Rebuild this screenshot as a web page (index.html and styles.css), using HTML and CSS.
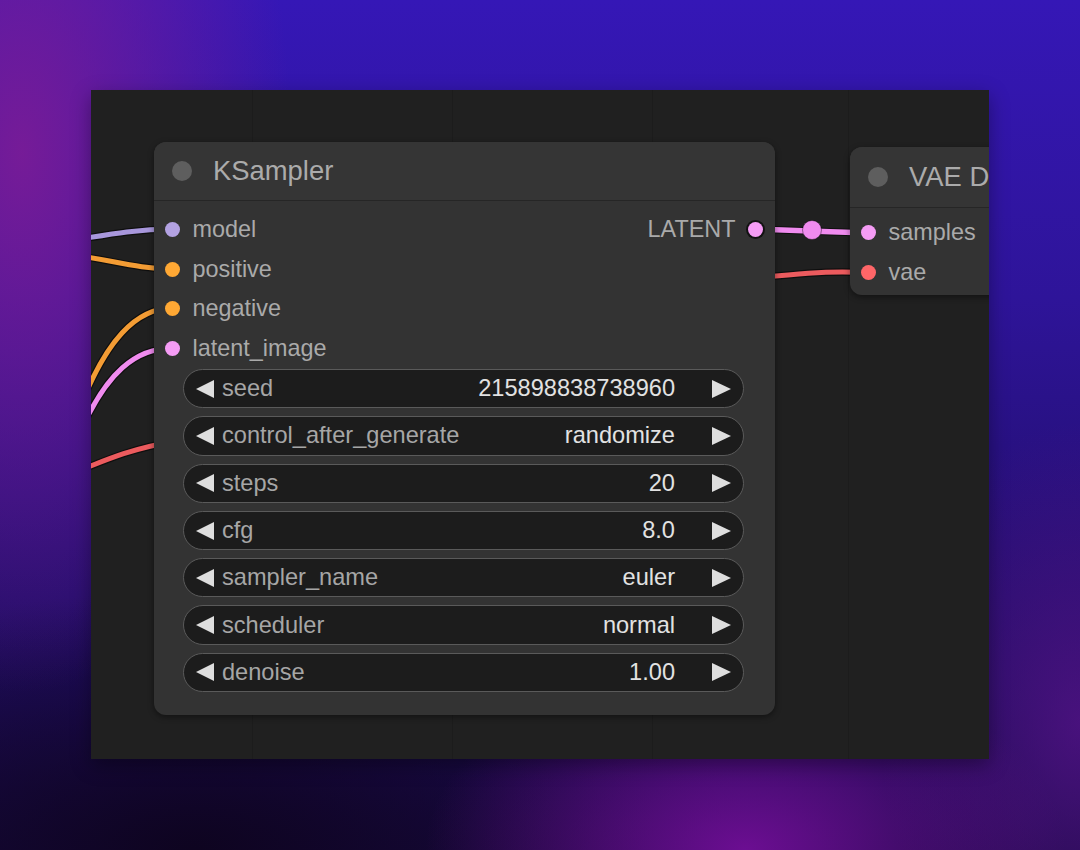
FILE: index.html
```html
<!DOCTYPE html>
<html>
<head>
<meta charset="utf-8">
<link rel="stylesheet" href="styles.css">
</head>
<body>
<div class="canvas">
  <svg class="wires" width="898" height="669" viewBox="0 0 898 669">
    <g fill="none" stroke-linecap="round">
      <path class="edge" d="M -40 154 C 10 146, 40 139, 82 139"/>
      <path class="w-purple" d="M -40 154 C 10 146, 40 139, 82 139"/>
      <path class="edge" d="M -40 163 C 10 166, 40 179, 82 179"/>
      <path class="w-orange" d="M -40 163 C 10 166, 40 179, 82 179"/>
      <path class="edge" d="M -12 320 C 15 250, 45 218, 82 218"/>
      <path class="w-orange" d="M -12 320 C 15 250, 45 218, 82 218"/>
      <path class="edge" d="M -12 345 C 15 282, 45 258, 82 258"/>
      <path class="w-pink" d="M -12 345 C 15 282, 45 258, 82 258"/>
      <path class="edge" d="M -30 388 C 10 372, 40 358, 82 352"/>
      <path class="w-red" d="M -30 388 C 10 372, 40 358, 82 352"/>
      <path class="edge" d="M 664 139 C 700 140, 740 142, 778 143"/>
      <path class="w-pink thick" d="M 664 139 C 700 140, 740 142, 778 143"/>
      <path class="edge" d="M 640 191 C 700 184, 740 180, 778 183"/>
      <path class="w-red" d="M 640 191 C 700 184, 740 180, 778 183"/>
    </g>
    <circle cx="721" cy="140" r="9.5" class="reroute"/>
  </svg>

  <div class="node ksampler">
    <div class="node-header">
      <span class="title-dot"></span>
      <span class="title">KSampler</span>
    </div>
    <div class="slots">
      <div class="inputs">
        <div class="slot"><span class="dot c-model"></span><span>model</span></div>
        <div class="slot"><span class="dot c-cond"></span><span>positive</span></div>
        <div class="slot"><span class="dot c-cond"></span><span>negative</span></div>
        <div class="slot"><span class="dot c-latent"></span><span>latent_image</span></div>
      </div>
      <div class="outputs">
        <div class="slot out"><span>LATENT</span><span class="dot c-latent ring"></span></div>
      </div>
    </div>
    <div class="widgets">
      <div class="widget"><span class="arr l"></span><span class="label">seed</span><span class="value">215898838738960</span><span class="arr r"></span></div>
      <div class="widget"><span class="arr l"></span><span class="label">control_after_generate</span><span class="value">randomize</span><span class="arr r"></span></div>
      <div class="widget"><span class="arr l"></span><span class="label">steps</span><span class="value">20</span><span class="arr r"></span></div>
      <div class="widget"><span class="arr l"></span><span class="label">cfg</span><span class="value">8.0</span><span class="arr r"></span></div>
      <div class="widget"><span class="arr l"></span><span class="label">sampler_name</span><span class="value">euler</span><span class="arr r"></span></div>
      <div class="widget"><span class="arr l"></span><span class="label">scheduler</span><span class="value">normal</span><span class="arr r"></span></div>
      <div class="widget"><span class="arr l"></span><span class="label">denoise</span><span class="value">1.00</span><span class="arr r"></span></div>
    </div>
  </div>

  <div class="node vae">
    <div class="node-header vae-header">
      <span class="title-dot"></span>
      <span class="title">VAE D</span>
    </div>
    <div class="slots vae-slots">
      <div class="inputs">
        <div class="slot"><span class="dot c-latent"></span><span>samples</span></div>
        <div class="slot"><span class="dot c-vae"></span><span>vae</span></div>
      </div>
    </div>
  </div>
</div>
</body>
</html>
```

FILE: styles.css
```css
html, body {
  margin: 0;
  padding: 0;
}
body {
  width: 1080px;
  height: 850px;
  overflow: hidden;
  font-family: "Liberation Sans", Arial, sans-serif;
  background:
    radial-gradient(ellipse 270px 540px at 2% 18%, rgba(125, 28, 150, 0.9), rgba(125, 28, 150, 0) 100%),
    radial-gradient(ellipse 320px 190px at 69% 100%, rgba(112, 14, 150, 0.95), rgba(112, 14, 150, 0) 100%),
    radial-gradient(ellipse 200px 300px at 100% 85%, rgba(90, 20, 140, 0.7), rgba(90, 20, 140, 0) 100%),
    radial-gradient(ellipse 560px 260px at 18% 100%, rgba(14, 4, 32, 1), rgba(14, 4, 32, 0) 100%),
    linear-gradient(180deg, #3517b6 0%, #2e1499 35%, #220e6c 70%, #190a45 100%);
}
.canvas {
  position: relative;
  margin: 90px 0 0 91px;
  width: 898px;
  height: 669px;
  overflow: hidden;
  background-color: #202020;
  background-image:
    linear-gradient(90deg, rgba(0,0,0,0) 161px, #1c1c1c 161px, #1c1c1c 162px, rgba(0,0,0,0) 162px),
    linear-gradient(90deg, rgba(0,0,0,0) 361px, #1c1c1c 361px, #1c1c1c 362px, rgba(0,0,0,0) 362px),
    linear-gradient(90deg, rgba(0,0,0,0) 561px, #1c1c1c 561px, #1c1c1c 562px, rgba(0,0,0,0) 562px),
    linear-gradient(90deg, rgba(0,0,0,0) 757px, #1c1c1c 757px, #1c1c1c 758px, rgba(0,0,0,0) 758px);
  box-shadow: 0 6px 18px rgba(0, 0, 0, 0.35);
}
.wires {
  position: absolute;
  left: 0;
  top: 0;
}
.edge { stroke: rgba(0,0,0,0.55); stroke-width: 7.5; }
.w-purple { stroke: #a897dc; stroke-width: 5; }
.w-orange { stroke: #f39c34; stroke-width: 5; }
.w-pink { stroke: #f08bef; stroke-width: 5; }
.w-pink.thick { stroke-width: 5.5; }
.w-red { stroke: #ec5b5e; stroke-width: 5; }
.reroute { fill: #f08bef; stroke: rgba(0,0,0,0.4); stroke-width: 1; }

.node {
  position: absolute;
  background: #333333;
  border-radius: 12px;
  box-shadow: 0 2px 6px rgba(0, 0, 0, 0.45);
  color: #a9a9a9;
}
.ksampler {
  left: 63px;
  top: 52px;
  width: 621px;
  height: 573px;
  display: flex;
  flex-direction: column;
}
.vae {
  left: 759px;
  top: 57px;
  width: 220px;
  height: 148px;
  display: flex;
  flex-direction: column;
}
.node-header {
  height: 59px;
  display: flex;
  align-items: center;
  border-bottom: 1.5px solid #262626;
  background: #353535;
  border-radius: 12px 12px 0 0;
  box-sizing: border-box;
}
.vae-header { height: 61px; }
.title-dot {
  width: 20px;
  height: 20px;
  border-radius: 50%;
  background: #5e5e5e;
  margin-left: 18px;
}
.title {
  margin-left: 21px;
  font-size: 27.4px;
  color: #ababab;
  white-space: nowrap;
}
.slots {
  display: flex;
  justify-content: space-between;
  padding: 9px 20px 0 11px;
}
.vae-slots { padding-top: 5px; }
.inputs, .outputs {
  display: flex;
  flex-direction: column;
}
.slot {
  height: 39.5px;
  display: flex;
  align-items: center;
  gap: 12.5px;
  font-size: 23.4px;
  color: #aaaaaa;
  white-space: nowrap;
}
.out { gap: 12px; margin-right: -7.5px; }
.dot {
  width: 15px;
  height: 15px;
  border-radius: 50%;
  flex: none;
}
.ring { box-shadow: 0 0 0 2px #121212; }
.c-model { background: #b3a2e2; }
.c-cond { background: #ffa834; }
.c-latent { background: #f59cf5; }
.c-vae { background: #ff6668; }

.widgets {
  display: flex;
  flex-direction: column;
  gap: 8px;
  padding: 1px 31px 0 29px;
}
.widget {
  height: 39.3px;
  box-sizing: border-box;
  border: 1.5px solid #5a5a5a;
  border-radius: 20px;
  background: #1c1c1c;
  display: flex;
  align-items: center;
  padding: 0 12px;
  font-size: 23.6px;
}
.arr {
  width: 0;
  height: 0;
  border-top: 9.5px solid transparent;
  border-bottom: 9.5px solid transparent;
  flex: none;
}
.arr.l { border-right: 18px solid #dedede; }
.arr.r { border-left: 19px solid #dedede; margin-left: 37px; }
.label {
  margin-left: 8px;
  color: #a6a6a6;
  flex: 1;
  white-space: nowrap;
}
.value {
  color: #e2e2e2;
  white-space: nowrap;
}
```
